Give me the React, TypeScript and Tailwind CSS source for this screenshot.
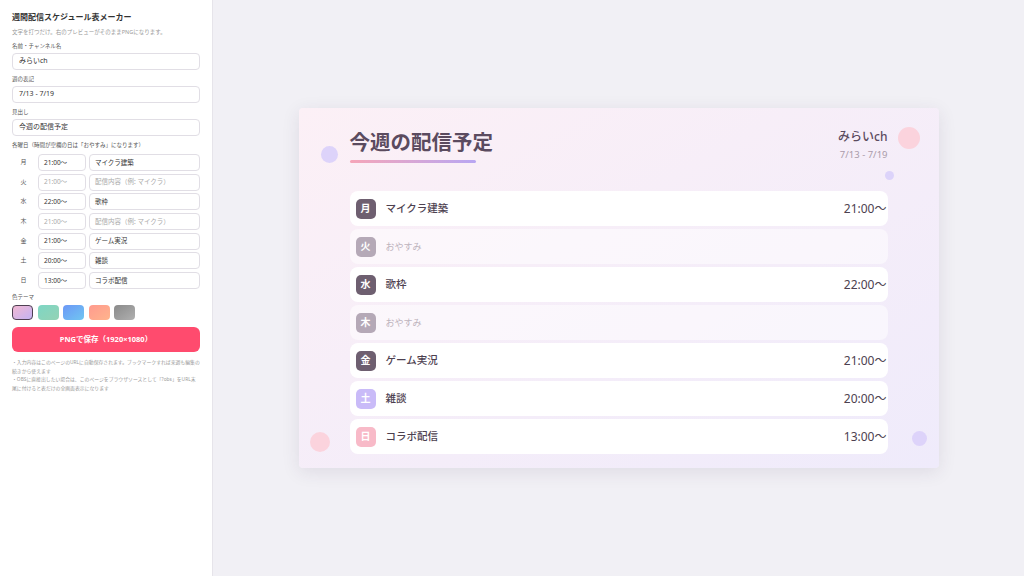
import React from 'react';

type Day = {
  label: string;
  time: string;
  title: string;
};

const days: Day[] = [
  { label: '月', time: '21:00〜', title: 'マイクラ建築' },
  { label: '火', time: '', title: '' },
  { label: '水', time: '22:00〜', title: '歌枠' },
  { label: '木', time: '', title: '' },
  { label: '金', time: '21:00〜', title: 'ゲーム実況' },
  { label: '土', time: '20:00〜', title: '雑談' },
  { label: '日', time: '13:00〜', title: 'コラボ配信' },
];

// badge colour per weekday (weekend keeps its colour)
const badgeColor = (label: string, off: boolean) => {
  if (label === '土') return 'bg-[#c9bbf8]';
  if (label === '日') return 'bg-[#f8bac8]';
  return off ? 'bg-[#b5a9b7]' : 'bg-[#6e5f70]';
};

const swatches = [
  'bg-linear-to-br from-[#f2b8d2] to-[#c3b2f3]',
  'bg-linear-to-br from-[#7dd6c4] to-[#94d2b4]',
  'bg-linear-to-br from-[#6c97f6] to-[#70c6f1]',
  'bg-linear-to-br from-[#ff9a8e] to-[#ffb48c]',
  'bg-linear-to-br from-[#8a8a8a] to-[#b0b0b0]',
];

function Field({ label, value }: { label: string; value: string }) {
  return (
    <div className="mt-[6px]">
      <div className="text-[5.5px] leading-[7px] text-[#555]">{label}</div>
      <div className="mt-[3px] h-[17px] rounded-[4px] border border-[#e1dee5] bg-white px-[6px] flex items-center text-[7px] text-[#333]">
        {value}
      </div>
    </div>
  );
}

export default function App() {
  return (
    <div
      className="flex h-[576px] w-[1024px] overflow-hidden bg-[#f1f0f5]"
      style={{ fontFamily: '"Noto Sans", "Noto Sans CJK JP", sans-serif' }}
    >
      {/* editor side */}
      <aside className="w-[213px] shrink-0 border-r border-[#e6e4ea] bg-white px-[12px] pt-[12px]">
        <h1 className="text-[8px] leading-[10px] font-bold text-[#333]">週間配信スケジュール表メーカー</h1>
        <p className="mt-[6px] text-[5.5px] leading-[8px] text-[#999]">
          文字を打つだけ。右のプレビューがそのままPNGになります。
        </p>

        <div className="pt-[1px]">
          <Field label="名前・チャンネル名" value="みらいch" />
        </div>
        <Field label="週の表記" value="7/13 - 7/19" />
        <Field label="見出し" value="今週の配信予定" />

        <div className="mt-[6px] text-[5.5px] leading-[7px] text-[#555]">
          各曜日（時間が空欄の日は「おやすみ」になります）
        </div>
        <div className="mt-[5px] flex flex-col gap-[2.7px]">
          {days.map((d) => (
            <div key={d.label} className="flex h-[17px] items-center gap-[3px]">
              <div className="w-[23px] text-center text-[6px] text-[#555]">{d.label}</div>
              <div
                className={`h-full w-[48px] rounded-[4px] border border-[#e1dee5] bg-white px-[5px] flex items-center text-[6.5px] ${
                  d.time ? 'text-[#333]' : 'text-[#aaa]'
                }`}
              >
                {d.time || '21:00〜'}
              </div>
              <div
                className={`h-full flex-1 rounded-[4px] border border-[#e1dee5] bg-white px-[5px] flex items-center text-[6.5px] ${
                  d.title ? 'text-[#333]' : 'text-[#aaa]'
                }`}
              >
                {d.title || '配信内容（例: マイクラ）'}
              </div>
            </div>
          ))}
        </div>

        <div className="mt-[5px] text-[5.5px] leading-[7px] text-[#555]">色テーマ</div>
        <div className="mt-[4px] flex gap-[4.5px]">
          {swatches.map((s, i) => (
            <div
              key={i}
              className={`h-[15px] w-[21px] rounded-[4px] ${s} ${
                i === 0 ? 'border-[1.5px] border-[#4e4052]' : ''
              }`}
            />
          ))}
        </div>

        <button className="mt-[7px] h-[25px] w-full rounded-[6px] bg-[#ff4b6e] text-[7.5px] font-bold text-white">
          PNGで保存（1920×1080）
        </button>

        <div className="mt-[6px] text-[4.85px] leading-[8.6px] text-[#9a9a9a]">
          <p>・入力内容はこのページのURLに自動保存されます。ブックマークすれば来週も編集の続きから使えます</p>
          <p>・OBSに直接出したい場合は、このページをブラウザソースとして「?obs」をURL末尾に付けると表だけの全画面表示になります</p>
        </div>
      </aside>

      {/* preview */}
      <main className="flex flex-1 items-center justify-center">
        <div className="relative h-[360px] w-[640px] overflow-hidden rounded-[4px] bg-linear-to-br from-[#fcf0f6] to-[#efebfb] px-[51px] pt-[20px] shadow-[0_4px_18px_rgba(60,40,80,0.10)]">
          <div className="absolute left-[22px] top-[38px] h-[17px] w-[17px] rounded-full bg-[#ddd3fa]" />
          <div className="absolute left-[599px] top-[19px] h-[22px] w-[22px] rounded-full bg-[#fbd3dd]" />
          <div className="absolute left-[586px] top-[63px] h-[9px] w-[9px] rounded-full bg-[#dcd3fa]" />
          <div className="absolute left-[11px] top-[324px] h-[20px] w-[20px] rounded-full bg-[#fbd3dd]" />
          <div className="absolute left-[613px] top-[323px] h-[15px] w-[15px] rounded-full bg-[#ddd3fa]" />

          <div className="relative flex items-start justify-between">
            <div>
              <div className="text-[20.5px] leading-[28px] font-bold text-[#5b4b5f]">今週の配信予定</div>
              <div className="mt-[4px] h-[3px] w-[126px] rounded-full bg-linear-to-r from-[#f5a5b8] to-[#b8a6f2]" />
            </div>
            <div className="text-right">
              <div className="text-[12px] leading-[18px] font-medium text-[#5b4b5f]">みらいch</div>
              <div className="mt-[2px] text-[9.5px] leading-[14px] text-[#a99ba9]">7/13 - 7/19</div>
            </div>
          </div>

          <div className="relative mt-[28px] flex flex-col gap-[3px]">
            {days.map((d) => {
              const off = !d.time;
              return (
                <div
                  key={d.label}
                  className={`flex h-[35px] items-center rounded-[8px] pl-[6px] pr-[1px] ${
                    off ? 'bg-white/50' : 'bg-white'
                  }`}
                >
                  <div
                    className={`flex h-[20px] w-[20px] items-center justify-center rounded-[5px] text-[10px] font-bold text-white ${badgeColor(
                      d.label,
                      off
                    )}`}
                  >
                    {d.label}
                  </div>
                  {off ? (
                    <div className="ml-[10px] text-[9px] text-[#bdb3bd]">おやすみ</div>
                  ) : (
                    <>
                      <div className="ml-[10px] flex-1 text-[10.5px] font-medium text-[#4d4150]">{d.title}</div>
                      <div className="text-[12px] text-[#4d4150]">{d.time}</div>
                    </>
                  )}
                </div>
              );
            })}
          </div>
        </div>
      </main>
    </div>
  );
}
